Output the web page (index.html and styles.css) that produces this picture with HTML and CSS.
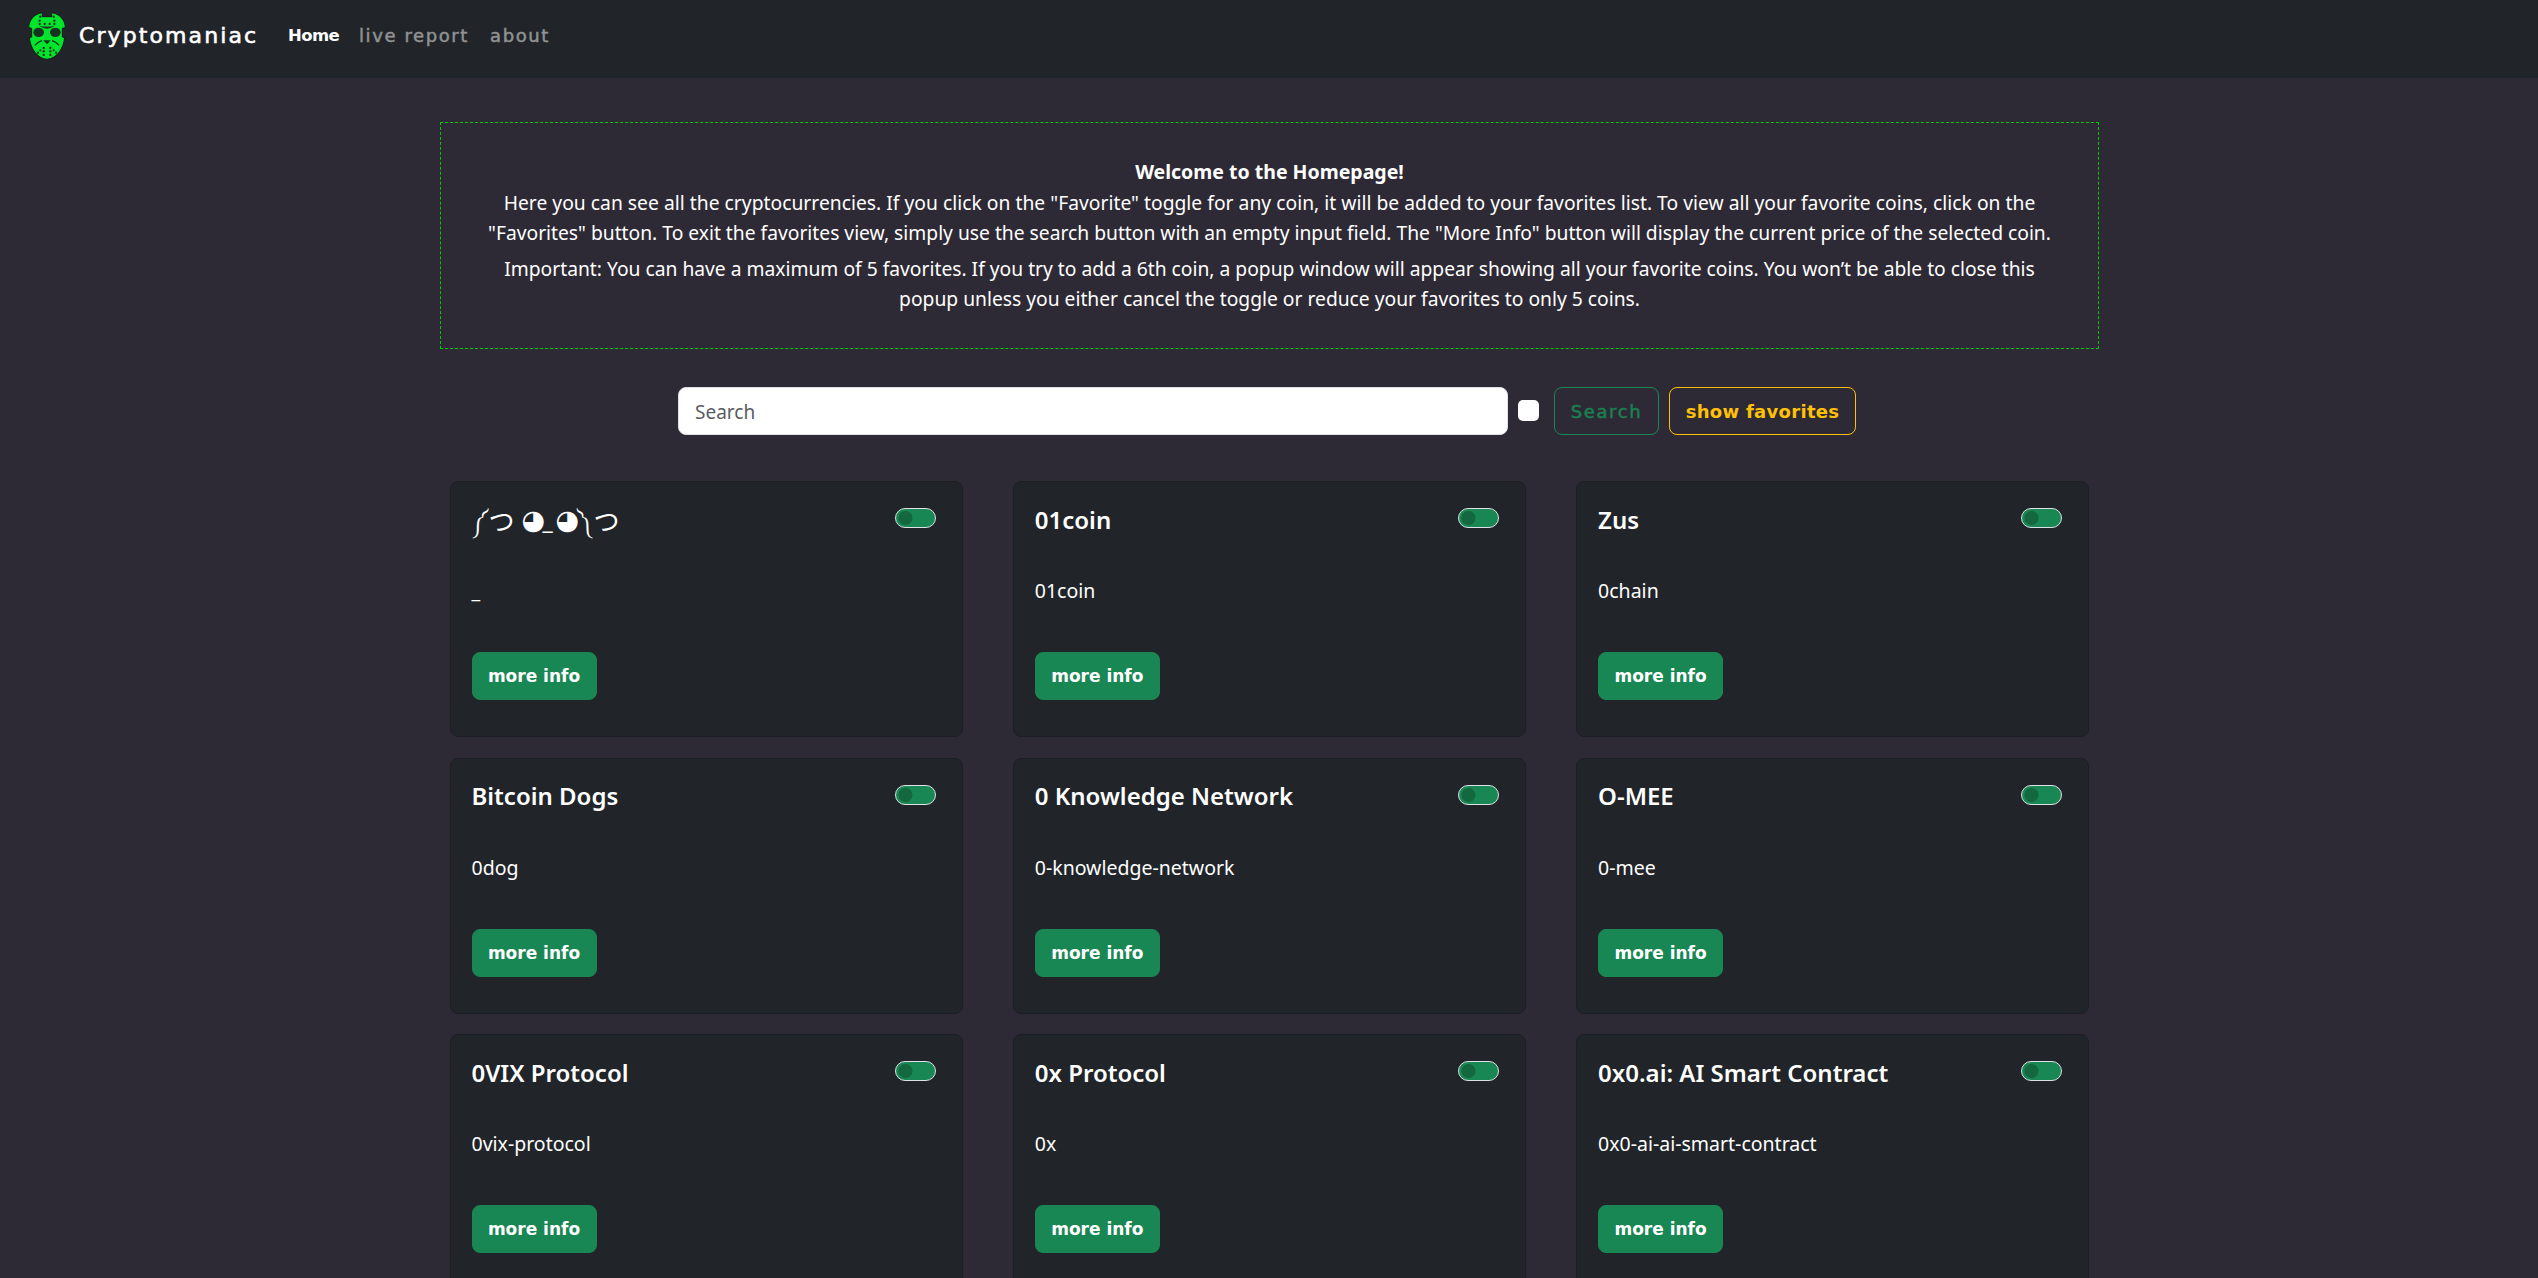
FILE: index.html
```
<!DOCTYPE html>
<html lang="en">
<head>
<meta charset="utf-8">
<title>Cryptomaniac</title>
<link rel="stylesheet" href="styles.css">
</head>
<body>
<nav class="navbar">
  <svg class="logo" viewBox="84 38 114 142" aria-hidden="true">
    <path fill="#00e52b" stroke="#15181a" stroke-width="3" d="M86 84C86 62 103 42 127 39L127 51L155 51L155 39C179 42 196 62 196 84L187 86L187 112L194 114C190 148 170 176 141 179C112 176 92 148 88 114L95 112L95 86Z"/>
    <g fill="#17331f">
      <ellipse cx="116" cy="98" rx="16" ry="14"/><ellipse cx="166" cy="98" rx="16" ry="14"/>
      <path d="M118 78Q141 83 164 78Q152 87 141 87Q130 87 118 78ZM130 122L152 122L141 134Z"/>
      <circle cx="121" cy="51" r="3.5"/><circle cx="119" cy="63" r="3.5"/><circle cx="119" cy="73" r="3.5"/>
      <circle cx="134" cy="73" r="3.5"/><circle cx="149" cy="73" r="3.5"/><circle cx="163" cy="73" r="3.5"/>
      <circle cx="163" cy="63" r="3.5"/><circle cx="161" cy="51" r="3.5"/>
      <circle cx="131" cy="145" r="3.5"/><circle cx="131" cy="155" r="3.5"/><circle cx="131" cy="166" r="3.5"/>
      <circle cx="151" cy="145" r="3.5"/><circle cx="151" cy="155" r="3.5"/><circle cx="151" cy="166" r="3.5"/>
      <circle cx="121" cy="152" r="3.2"/><circle cx="114" cy="159" r="3.2"/><circle cx="161" cy="152" r="3.2"/><circle cx="168" cy="159" r="3.2"/>
    </g>
    <path fill="none" stroke="#17331f" stroke-width="4" d="M105 137Q112 127 126 123M177 137Q170 127 156 123"/>
  </svg>
  <a class="brand">Cryptomaniac</a>
  <a class="link active">Home</a>
  <a class="link report">live report</a>
  <a class="link">about</a>
</nav>
<main>
  <section class="intro">
    <p><b>Welcome to the Homepage!</b><br><span class="wide">Here you can see all the cryptocurrencies. If you click on the "Favorite" toggle for any coin, it will be added to your favorites list. To view all your favorite coins, click on the</span><br>"Favorites" button. To exit the favorites view, simply use the search button with an empty input field. The "More Info" button will display the current price of the selected coin.</p>
    <p>Important: You can have a maximum of 5 favorites. If you try to add a 6th coin, a popup window will appear showing all your favorite coins. You won’t be able to close this<br>popup unless you either cancel the toggle or reduce your favorites to only 5 coins.</p>
  </section>
  <form class="search">
    <input class="field" type="text" placeholder="Search">
    <span class="check"></span>
    <button class="btn outline-green" type="button">Search</button>
    <button class="btn outline-gold" type="button">show favorites</button>
  </form>
  <section class="grid">
    <article class="card"><header><h2 class="face"><span class="arm">༼</span><span class="hand">つ </span><span class="eye">◕</span><span class="mouth">_</span><span class="eye">◕</span><span class="arm">༽</span><span class="hand">つ</span></h2><span class="toggle"></span></header><p>_</p><button class="btn green" type="button">more info</button></article>
    <article class="card"><header><h2>01coin</h2><span class="toggle"></span></header><p>01coin</p><button class="btn green" type="button">more info</button></article>
    <article class="card"><header><h2>Zus</h2><span class="toggle"></span></header><p>0chain</p><button class="btn green" type="button">more info</button></article>
    <article class="card"><header><h2>Bitcoin Dogs</h2><span class="toggle"></span></header><p>0dog</p><button class="btn green" type="button">more info</button></article>
    <article class="card"><header><h2>0 Knowledge Network</h2><span class="toggle"></span></header><p>0-knowledge-network</p><button class="btn green" type="button">more info</button></article>
    <article class="card"><header><h2>O-MEE</h2><span class="toggle"></span></header><p>0-mee</p><button class="btn green" type="button">more info</button></article>
    <article class="card"><header><h2>0VIX Protocol</h2><span class="toggle"></span></header><p>0vix-protocol</p><button class="btn green" type="button">more info</button></article>
    <article class="card"><header><h2>0x Protocol</h2><span class="toggle"></span></header><p>0x</p><button class="btn green" type="button">more info</button></article>
    <article class="card"><header><h2>0x0.ai: AI Smart Contract</h2><span class="toggle"></span></header><p>0x0-ai-ai-smart-contract</p><button class="btn green" type="button">more info</button></article>
  </section>
</main>
</body>
</html>
```
FILE: styles.css
```
* { box-sizing: border-box; }
html { height: 100%; overflow: hidden; }
body {
  margin: 0;
  height: 100%;
  overflow: hidden;
  background: #2e2a35;
  color: #fff;
  font: 19.25px/30px "Noto Sans", "Noto Sans CJK JP", sans-serif;
}
p, h2 { margin: 0; }

.navbar {
  display: flex;
  height: 78px;
  padding: 0 0 6px 28px;
  align-items: center;
  background: #212529;
  font-family: "DejaVu Sans", sans-serif;
  white-space: nowrap;
}
.logo { width: 38px; height: 48px; }
.brand { width: 209px; margin-left: 13px; font-size: 22px; letter-spacing: 2.1px; -webkit-text-stroke: 0.6px; }
.link { margin-right: 20px; color: #909294; font-size: 18px; letter-spacing: 1.6px; -webkit-text-stroke: 0.5px; }
.link.active { width: 51px; color: #fff; font-size: 16.5px; font-weight: 700; letter-spacing: -0.6px; -webkit-text-stroke: 0; }
.link.report { width: 111px; }

.intro {
  width: 1659px;
  height: 227px;
  margin: 44px 0 0 440px;
  padding-top: 34px;
  border: 1px dashed #00cc00;
  text-align: center;
  white-space: nowrap;
}
.intro p { margin-bottom: 5px; line-height: 30.5px; }
.intro b { font-size: 19.5px; }
.wide { letter-spacing: 0.025px; }

.search { display: flex; align-items: center; height: 48px; margin: 38px 0 0 678px; }
.field {
  width: 830px;
  height: 48px;
  padding: 2px 16px 0;
  border: 1px solid #dee2e6;
  border-radius: 8px;
  background: #fff;
  font: 19px "Noto Sans", sans-serif;
}
.field::placeholder { color: #595c5f; }
.check { width: 21px; height: 21px; margin: 0 15px 2px 10px; border-radius: 5px; background: #fff; }

.btn {
  height: 48px;
  padding: 0;
  border: 1px solid;
  border-radius: 8px;
  background: none;
  font: 700 17px "DejaVu Sans", sans-serif;
  white-space: nowrap;
}
.outline-green { width: 105px; border-color: #198754; color: #1b7f51; font-size: 18px; font-weight: 400; letter-spacing: 1.6px; -webkit-text-stroke: 0.5px; }
.outline-gold { width: 187px; margin-left: 10px; border-color: #ffc107; color: #ffc107; font-size: 18px; letter-spacing: 0.3px; }
.green { width: 125px; border-color: #198754; background: #198754; color: #fff; }

.grid {
  display: grid;
  grid-template-columns: repeat(3, 513px);
  grid-auto-rows: 256px;
  gap: 20.6px 50.3px;
  margin: 46px 0 0 449.5px;
}
.card {
  padding: 22px 26px 0 21px;
  border: 1px solid #1c1f23;
  border-radius: 8px;
  background: #212529;
}
.card header { display: flex; justify-content: space-between; height: 72px; }
.card h2 { margin-top: -1.5px; font-size: 24px; font-weight: 600; line-height: 34px; }
.card .face { display: flex; font-weight: 400; white-space: pre; }
.arm { width: 17px; font-size: 20px; line-height: 38px; }
.hand { width: 33px; font-family: "Noto Sans CJK JP", sans-serif; font-size: 26px; }
.eye { width: 21px; font-family: "DejaVu Sans", sans-serif; font-size: 27px; }
.mouth { width: 13px; font-weight: 600; }
.card p { height: 76px; font-size: 19.5px; line-height: 30px; }
.toggle {
  width: 41px;
  height: 20px;
  margin-top: 4px;
  border: 1px solid #dee2e6;
  border-radius: 10px;
  background: radial-gradient(circle at 9.5px 9px, #14683f 6.6px, #198754 7.4px);
}
```
